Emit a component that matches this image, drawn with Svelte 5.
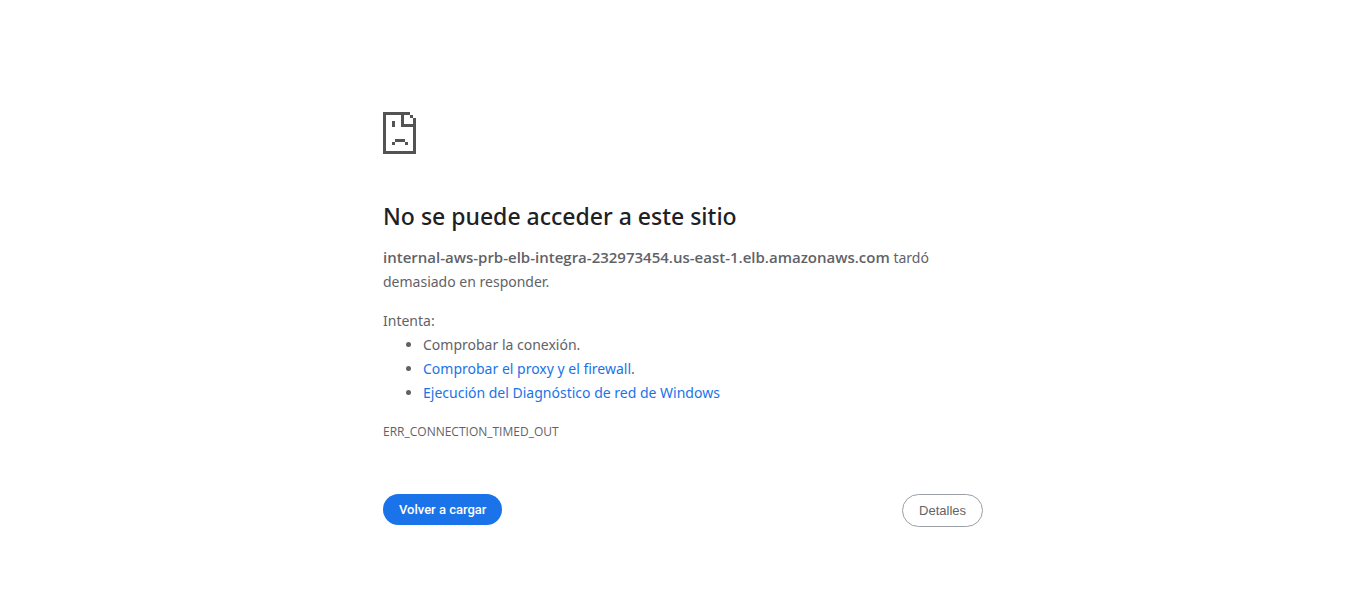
<script>
  const error = 'ERR_CONNECTION_TIMED_OUT';
  const host = 'internal-aws-prb-elb-integra-232973454.us-east-1.elb.amazonaws.com';

  let showDetails = $state(false);
</script>

<main>
  <svg class="icon" viewBox="0 0 33 42" shape-rendering="crispEdges" aria-hidden="true">
    <path
      fill="#535353"
      d="M0 0H27V3H21V12H33V42H0ZM3 3V39H30V15H18V3ZM27 3H30V6H27ZM30 6H33V12H30ZM9 9H12V15H9ZM12 27H22V30H12ZM9 30H12V33H9ZM22 30H25V33H22Z"
      fill-rule="evenodd"
    />
  </svg>

  <h1>No se puede acceder a este sitio</h1>
  <p><strong>{host}</strong> tardó demasiado en responder.</p>

  <div class="suggestions">
    <p>Intenta:</p>
    <ul>
      <li>Comprobar la conexión.</li>
      <li><a href="#proxy">Comprobar el proxy y el firewall</a>.</li>
      <li><a href="#diagnostico">Ejecución del Diagnóstico de red de Windows</a></li>
    </ul>
  </div>

  <div class="code">{error}</div>

  <div class="actions">
    <button class="primary" type="button" onclick={() => location.reload()}>Volver a cargar</button>
    <button class="secondary" type="button" aria-expanded={showDetails} onclick={() => (showDetails = !showDetails)}>Detalles</button>
  </div>
</main>

<style>
  :global(body) {
    background: #fff;
  }

  main {
    box-sizing: border-box;
    width: 100%;
    max-width: 600px;
    margin: 0 auto;
    padding: 112px 0 62px;
    color: #5f6368;
    font-family: 'Noto Sans', sans-serif;
    font-size: 14px;
    line-height: 24px;
  }

  .icon {
    display: block;
    width: 33px;
    height: 42px;
    margin-bottom: 48px;
  }

  h1 {
    margin: 0 0 16px;
    color: #202124;
    font-size: 23px;
    font-weight: 500;
    line-height: 28px;
  }

  p {
    margin: 0;
  }

  strong {
    font-family: 'Open Sans', sans-serif;
    font-size: 15px;
    font-weight: 600;
    line-height: 20px;
  }

  .suggestions {
    margin-top: 15px;
  }

  ul {
    margin: 0;
    padding-left: 40px;
  }

  a {
    color: #1a73e8;
    text-decoration: none;
  }

  .code {
    margin-top: 15px;
    font-family: 'Open Sans', sans-serif;
    font-size: 12px;
  }

  .actions {
    display: flex;
    flex-wrap: wrap;
    align-items: flex-start;
    justify-content: space-between;
    gap: 16px;
    margin-top: 50px;
  }

  button {
    border: 0;
    border-radius: 20px;
    padding: 8px 16px;
    font-family: 'Liberation Sans', Arial, sans-serif;
    font-size: 13px;
    line-height: 15px;
    cursor: pointer;
  }

  .primary {
    background: #1a73e8;
    color: #fff;
    font-family: Roboto, sans-serif;
    font-weight: 500;
  }

  .secondary {
    border: 1px solid #9aa0a6;
    background: #fff;
    color: #5f6368;
  }
</style>
